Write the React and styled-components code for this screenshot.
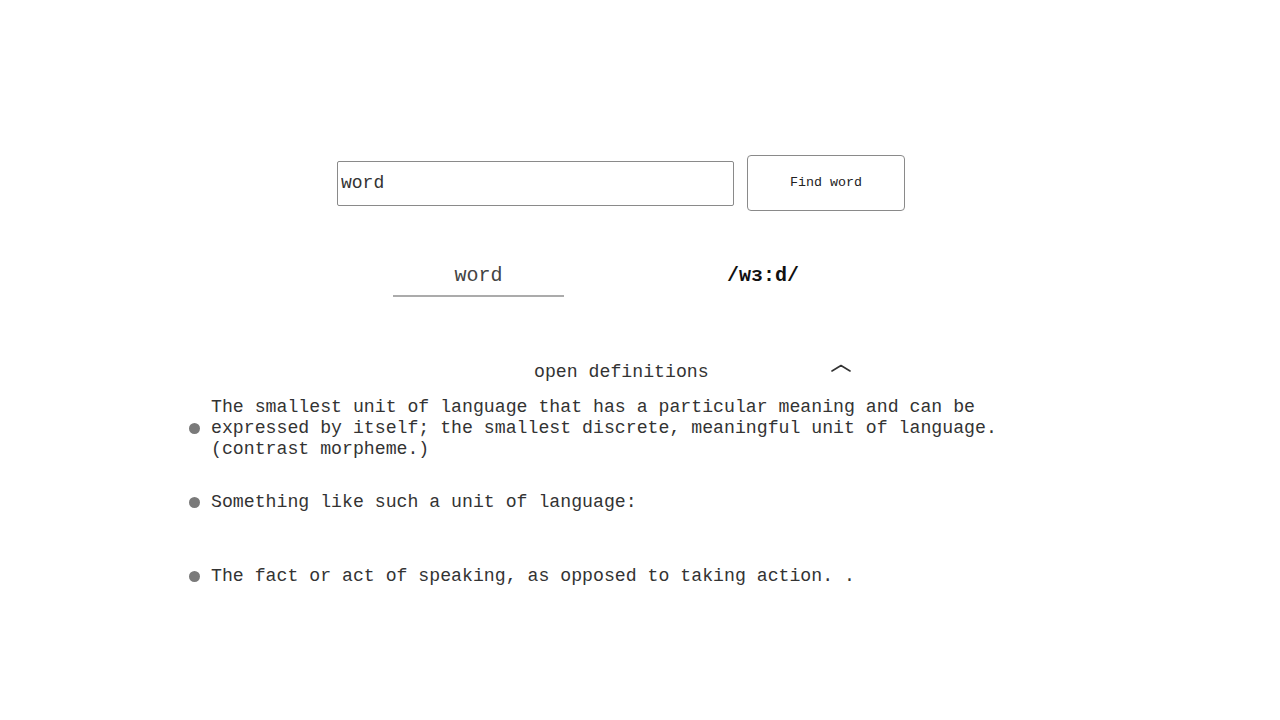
import React from "react";
import styled, { createGlobalStyle } from "styled-components";

const GlobalStyle = createGlobalStyle`
  html, body {
    margin: 0;
    padding: 0;
    background: #fff;
  }
  body {
    font-family: "Liberation Mono", "Courier New", monospace;
    color: #333;
  }
`;

const Page = styled.main`
  width: 1280px;
  height: 720px;
  padding-top: 155px;
  box-sizing: border-box;
`;

const SearchRow = styled.form`
  display: flex;
  align-items: center;
  gap: 13px;
  padding-left: 337px;
`;

const SearchInput = styled.input`
  width: 397px;
  height: 45px;
  box-sizing: border-box;
  border: 1px solid #8a8a8a;
  border-radius: 2px;
  padding: 0 3px;
  font-family: "Liberation Mono", "Courier New", monospace;
  font-size: 18px;
  color: #333;
  outline: none;
`;

const FindButton = styled.button`
  width: 158px;
  height: 56px;
  box-sizing: border-box;
  background: #fff;
  border: 1px solid #8a8a8a;
  border-radius: 4px;
  font-family: "Liberation Mono", "Courier New", monospace;
  font-size: 13.33px;
  color: #222;
  padding-bottom: 3px;
  cursor: pointer;
`;

const WordRow = styled.section`
  display: flex;
  align-items: flex-start;
  margin-top: 53px;
  padding-left: 393px;
`;

const WordCell = styled.div`
  width: 171px;
  border-bottom: 2px solid #ababab;
  text-align: center;
  font-size: 20px;
  line-height: 24px;
  padding-bottom: 7px;
  color: #444;
`;

const Phonetic = styled.div`
  margin-left: 163px;
  font-size: 20px;
  line-height: 24px;
  font-weight: bold;
  color: #111;
`;

const DefHeader = styled.div`
  display: flex;
  align-items: center;
  margin-top: 65px;
  padding-left: 534px;
`;

const HeaderLabel = styled.span`
  font-size: 18.2px;
  line-height: 21px;
  color: #333;
`;

const Caret = styled.svg`
  margin-left: 122px;
  margin-top: -10px;
`;

const DefList = styled.ul`
  list-style: none;
  margin: 14px 0 0;
  padding: 0 0 0 189px;
`;

const DefItem = styled.li`
  display: flex;
  align-items: center;
  gap: 11px;
  margin-bottom: ${({ $gap }) => $gap}px;
`;

const Bullet = styled.span`
  flex: none;
  width: 11px;
  height: 11px;
  border-radius: 50%;
  background: #7a7a7a;
`;

const DefText = styled.p`
  margin: 0;
  width: 800px;
  font-size: 18.2px;
  line-height: 21px;
  color: #333;
`;

const definitions = [
  {
    text: "The smallest unit of language that has a particular meaning and can be expressed by itself; the smallest discrete, meaningful unit of language. (contrast morpheme.)",
    gap: 32,
  },
  { text: "Something like such a unit of language:", gap: 53 },
  { text: "The fact or act of speaking, as opposed to taking action. .", gap: 0 },
];

const App = () => {
  return (
    <>
      <GlobalStyle />
      <Page>
        <SearchRow onSubmit={(e) => e.preventDefault()}>
          <SearchInput defaultValue="word" />
          <FindButton type="submit">Find word</FindButton>
        </SearchRow>

        <WordRow>
          <WordCell>word</WordCell>
          <Phonetic>/wɜ:d/</Phonetic>
        </WordRow>

        <DefHeader>
          <HeaderLabel>open definitions</HeaderLabel>
          <Caret width="20" height="8" viewBox="0 0 20 8">
            <path
              d="M1 7 L10 1.5 L19 7"
              fill="none"
              stroke="#333"
              strokeWidth="1.6"
              strokeLinecap="round"
              strokeLinejoin="round"
            />
          </Caret>
        </DefHeader>

        <DefList>
          {definitions.map((d, i) => (
            <DefItem key={i} $gap={d.gap}>
              <Bullet />
              <DefText>{d.text}</DefText>
            </DefItem>
          ))}
        </DefList>
      </Page>
    </>
  );
};

export default App;
